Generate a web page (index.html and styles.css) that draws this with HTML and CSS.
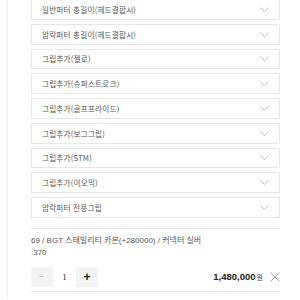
FILE: index.html
```html
<!DOCTYPE html>
<html lang="ko">
<head>
  <meta charset="UTF-8">
  <meta name="viewport" content="width=device-width, initial-scale=1.0">
  <title>옵션 선택</title>
  <link rel="stylesheet" href="styles.css">
</head>
<body>
  <div class="page">
    <div class="options">
      <!-- 옵션 선택 박스 -->
      <div class="select-box"><span>일반퍼터 총길이(헤드결합시)</span><svg class="chev" width="9" height="5" viewBox="0 0 9 5"><path d="M0.5 0.5 L4.5 4.5 L8.5 0.5" fill="none" stroke="#b5b5b5" stroke-width="0.9"/></svg></div>
      <div class="select-box"><span>암락퍼터 총길이(헤드결합시)</span><svg class="chev" width="9" height="5" viewBox="0 0 9 5"><path d="M0.5 0.5 L4.5 4.5 L8.5 0.5" fill="none" stroke="#b5b5b5" stroke-width="0.9"/></svg></div>
      <div class="select-box"><span>그립추가(젤로)</span><svg class="chev" width="9" height="5" viewBox="0 0 9 5"><path d="M0.5 0.5 L4.5 4.5 L8.5 0.5" fill="none" stroke="#b5b5b5" stroke-width="0.9"/></svg></div>
      <div class="select-box"><span>그립추가(슈퍼스트로크)</span><svg class="chev" width="9" height="5" viewBox="0 0 9 5"><path d="M0.5 0.5 L4.5 4.5 L8.5 0.5" fill="none" stroke="#b5b5b5" stroke-width="0.9"/></svg></div>
      <div class="select-box"><span>그립추가(골프프라이드)</span><svg class="chev" width="9" height="5" viewBox="0 0 9 5"><path d="M0.5 0.5 L4.5 4.5 L8.5 0.5" fill="none" stroke="#b5b5b5" stroke-width="0.9"/></svg></div>
      <div class="select-box"><span>그립추가(보그그립)</span><svg class="chev" width="9" height="5" viewBox="0 0 9 5"><path d="M0.5 0.5 L4.5 4.5 L8.5 0.5" fill="none" stroke="#b5b5b5" stroke-width="0.9"/></svg></div>
      <div class="select-box"><span>그립추가(STM)</span><svg class="chev" width="9" height="5" viewBox="0 0 9 5"><path d="M0.5 0.5 L4.5 4.5 L8.5 0.5" fill="none" stroke="#b5b5b5" stroke-width="0.9"/></svg></div>
      <div class="select-box"><span>그립추가(이오믹)</span><svg class="chev" width="9" height="5" viewBox="0 0 9 5"><path d="M0.5 0.5 L4.5 4.5 L8.5 0.5" fill="none" stroke="#b5b5b5" stroke-width="0.9"/></svg></div>
      <div class="select-box"><span>암락퍼터 전용그립</span><svg class="chev" width="9" height="5" viewBox="0 0 9 5"><path d="M0.5 0.5 L4.5 4.5 L8.5 0.5" fill="none" stroke="#b5b5b5" stroke-width="0.9"/></svg></div>
    </div>

    <!-- 선택된 옵션 -->
    <div class="selected">
      <p class="selected-name">69 / BGT 스태빌리티 카본(+280000) / 커넥터 실버<br>.370</p>
      <div class="selected-row">
        <div class="qty">
          <button class="qty-btn minus">−</button>
          <span class="qty-val">1</span>
          <button class="qty-btn plus">+</button>
        </div>
        <div class="price"><b>1,480,000</b><span class="won">원</span>
          <svg class="close" width="10" height="10" viewBox="0 0 10 10"><path d="M0.5 0.5 L9.5 9.5 M9.5 0.5 L0.5 9.5" stroke="#9a9a9a" stroke-width="0.9"/></svg>
        </div>
      </div>
    </div>
  </div>
</body>
</html>
```

FILE: styles.css
```css
body {
  margin: 0;
  background: #fff;
  font-family: "Noto Sans CJK KR", "Liberation Sans", sans-serif;
  color: #555;
}
.page {
  margin-left: 7px;
  border-left: 1px solid #efefef;
  height: 300px;
  padding-left: 23px;
  width: 249px;
}
.options {
  display: flex;
  flex-direction: column;
  gap: 4px;
  margin-top: -1px;
}
.select-box {
  box-sizing: border-box;
  height: 20.75px;
  border: 1px solid #e6e6e6;
  display: flex;
  align-items: center;
  justify-content: space-between;
  padding: 0 10px 0 10px;
  font-size: 7.6px;
  letter-spacing: 0.2px;
  color: #555;
}
.chev {
  display: block;
}
.selected {
  margin-top: 10px;
  border-top: 1px solid #e2e2e2;
  border-bottom: 1px solid #e2e2e2;
  padding: 6px 0 4px;
}
.selected-name {
  margin: 0;
  font-family: "Liberation Sans", "Noto Sans CJK KR", sans-serif;
  font-size: 8px;
  line-height: 12px;
  color: #555;
}
.selected-row {
  display: flex;
  align-items: center;
  justify-content: space-between;
  margin-top: 8px;
}
.qty {
  display: flex;
  height: 20px;
}
.qty-btn {
  width: 22px;
  border: none;
  padding: 0;
  background: #f3f3f3;
  font-family: "Liberation Sans", sans-serif;
  cursor: pointer;
}
.minus {
  color: #c4c4c4;
  font-size: 10px;
}
.plus {
  color: #222;
  font-size: 12px;
  font-weight: bold;
}
.qty-val {
  width: 23px;
  display: flex;
  align-items: center;
  justify-content: center;
  font-family: "Liberation Serif", serif;
  font-size: 9px;
  color: #222;
}
.price {
  display: flex;
  align-items: center;
  font-family: "Liberation Sans", sans-serif;
  font-size: 9.5px;
  color: #222;
}
.won {
  font-family: "Noto Sans CJK KR", sans-serif;
  font-size: 7px;
  margin-left: 1px;
  color: #444;
}
.close {
  margin-left: 7px;
}
```
